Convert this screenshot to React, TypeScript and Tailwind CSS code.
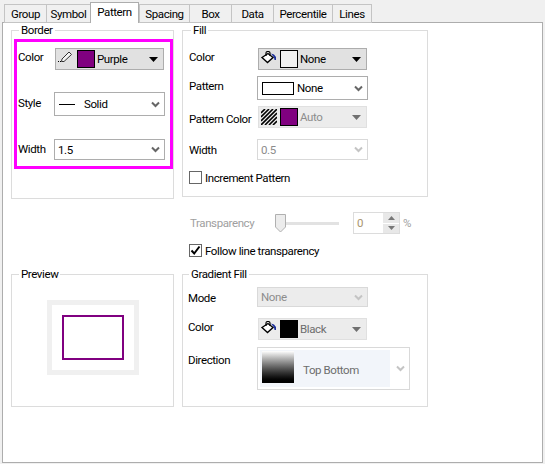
import type { ReactNode } from 'react';

const tabs = [
  { name: 'Group', w: 'w-[42px]' },
  { name: 'Symbol', w: 'w-[44px]' },
  { name: 'Pattern', w: 'w-[49px]', active: true },
  { name: 'Spacing', w: 'w-[50px]' },
  { name: 'Box', w: 'w-[42px]' },
  { name: 'Data', w: 'w-[42px]' },
  { name: 'Percentile', w: 'w-[59px]' },
  { name: 'Lines', w: 'w-[40px]' },
];

function Chevron({ muted }: { muted?: boolean }) {
  return (
    <svg width="9" height="7" viewBox="0 0 9 7" className="shrink-0">
      <path d="M1 1.5 L4.5 5 L8 1.5" fill="none" stroke={muted ? '#c4c4c4' : '#666666'} strokeWidth="2" />
    </svg>
  );
}

function Triangle({ muted }: { muted?: boolean }) {
  return (
    <svg width="9" height="5" viewBox="0 0 9 5" className="shrink-0">
      <path d="M0 0 H9 L4.5 5 Z" fill={muted ? '#707070' : '#000000'} />
    </svg>
  );
}

function PenIcon() {
  return (
    <svg width="16" height="16" viewBox="0 0 16 16" className="shrink-0">
      <path d="M4 8 L11 1 L13.5 3.5 L6 10.5 L3.5 10.5 Z" fill="#f4f4f4" stroke="#333333" strokeWidth="1" />
      <path d="M0 10.5h1M2 10.5h1" stroke="#000000" strokeWidth="1" />
    </svg>
  );
}

function BucketIcon() {
  return (
    <svg width="16" height="16" viewBox="0 0 16 16" className="shrink-0">
      <path d="M1 6.5 L7 2.5 L12 6.5 L6.5 11.5 Z" fill="#ffffff" stroke="#000000" strokeWidth="1.4" />
      <path d="M5 5 V2 Q5 0.5 7 0.5 Q9 0.5 9 2 V5" fill="none" stroke="#000000" strokeWidth="1.2" />
      <path d="M10 2.5 L13 3.5 L15 6 L15 9 L13.5 9 L13 6.5 Z" fill="#1c2f9c" />
    </svg>
  );
}

function HatchIcon() {
  return (
    <svg width="16" height="16" viewBox="0 0 16 16" className="shrink-0">
      <path d="M0 4L4 0M0 8L8 0M0 12L12 0M0 16L16 0M4 16L16 4M8 16L16 8M12 16L16 12" stroke="#000000" strokeWidth="1.6" />
    </svg>
  );
}

function ColorCombo({ icon, swatch, label, disabled, textColor }: { icon: ReactNode; swatch: string; label: string; disabled?: boolean; textColor?: string }) {
  return (
    <div className={`flex h-[22px] w-[109px] items-center border pl-[2px] ${disabled ? 'border-[#e0e0e0] bg-[#ececec]' : 'border-[#adadad] bg-[#e1e1e1]'}`}>
      {icon}
      <span className={`ml-[3px] h-[18px] w-[18px] shrink-0 border border-black ${swatch}`} />
      <span className={`ml-[2px] flex-1 ${textColor ?? 'text-black'}`}>{label}</span>
      <span className="mr-[5px]"><Triangle muted={disabled} /></span>
    </div>
  );
}

function Select({ children, h = 'h-[24px]', w = 'w-[111px]', disabled, bg }: { children: ReactNode; h?: string; w?: string; disabled?: boolean; bg?: string }) {
  return (
    <div className={`flex ${h} ${w} items-center border pr-[4px] ${disabled ? 'border-[#d9d9d9]' : 'border-[#adadad]'} ${bg ?? 'bg-white'}`}>
      <div className="flex min-w-0 flex-1 items-center">{children}</div>
      <Chevron muted={disabled} />
    </div>
  );
}

function Label({ children, w, mt }: { children: ReactNode; w: string; mt: string }) {
  return <span className={`shrink-0 self-start whitespace-nowrap ${w} ${mt}`}>{children}</span>;
}

function Group({ title, className, children, legend }: { title: string; className: string; children: ReactNode; legend: string }) {
  return (
    <div className={`relative border border-[#dcdcdc] ${className}`}>
      <span className={`absolute top-[-9px] bg-white px-[2px] ${legend}`}>{title}</span>
      {children}
    </div>
  );
}

function Checkbox({ checked, label }: { checked?: boolean; label: string }) {
  return (
    <div className="flex h-[13px] items-center">
      <span className="flex h-[13px] w-[13px] shrink-0 items-center justify-center border border-[#666666] bg-white">
        {checked && (
          <svg width="11" height="11" viewBox="0 0 11 11">
            <path d="M1.5 5.5 L4.2 8.5 L9.5 1.5" fill="none" stroke="#000000" strokeWidth="2" />
          </svg>
        )}
      </span>
      <span className="ml-[3px]">{label}</span>
    </div>
  );
}

export default function App() {
  return (
    <div className="h-[464px] w-[545px] overflow-hidden bg-[#f0f0f0] text-[11.5px] leading-[16px] tracking-[-0.4px] text-black" style={{ fontFamily: 'Roboto, sans-serif' }}>
      {/* Tabs */}
      <div className="relative z-10 flex h-[23px] items-end pl-[4px]">
        {tabs.map((tab) => (
          <div
            key={tab.name}
            className={
              tab.active
                ? `flex h-[21px] ${tab.w} items-start justify-center border border-b-0 border-[#adadad] bg-white pt-[1px]`
                : `flex h-[19px] ${tab.w} items-center justify-center border border-r-0 border-[#c4c4c4] bg-[#f0f0f0] last:border-r`
            }
          >
            {tab.name}
          </div>
        ))}
      </div>

      {/* Panel */}
      <div className="-mt-px ml-[2px] flex h-[441px] w-[541px] gap-[8px] border border-[#adadad] bg-white pl-[8px] pt-[7px]">
        <div className="flex w-[163px] flex-col">
          <Group title="Border" className="h-[169px]" legend="left-[7px]">
            <div className="ml-[2px] mt-[8px] flex h-[130px] w-[159px] flex-col border-[3px] border-[#ff00ff] pl-[1px]">
              <div className="mt-[6px] flex">
                <Label w="w-[37px]" mt="mt-[1px]">Color</Label>
                <ColorCombo icon={<PenIcon />} swatch="bg-[#800080]" label="Purple" />
              </div>
              <div className="mt-[22px] flex">
                <Label w="w-[36px]" mt="mt-[3px]">Style</Label>
                <Select>
                  <span className="ml-[4px] h-px w-[16px] bg-black" />
                  <span className="ml-[9px]">Solid</span>
                </Select>
              </div>
              <div className="mt-[23px] flex">
                <Label w="w-[36px]" mt="mt-[2px]">Width</Label>
                <Select h="h-[21px]"><span className="ml-[3px]">1.5</span></Select>
              </div>
            </div>
          </Group>

          <Group title="Preview" className="mt-[75px] h-[133px]" legend="left-[7px]">
            <div className="ml-[35px] mt-[25px] flex h-[75px] w-[92px] items-center justify-center border-[5px] border-[#f0f0f0]">
              <div className="h-[45px] w-[62px] border-2 border-[#800080]" />
            </div>
          </Group>
        </div>

        <div className="flex w-[246px] flex-col">
          <Group title="Fill" className="h-[167px] pl-[6px]" legend="left-[8px]">
            <div className="mt-[17px] flex">
              <Label w="w-[69px]" mt="mt-[1px]">Color</Label>
              <ColorCombo icon={<BucketIcon />} swatch="bg-[#f0f0f0]" label="None" />
            </div>
            <div className="mt-[6px] flex">
              <Label w="w-[68px]" mt="mt-[2px]">Pattern</Label>
              <Select>
                <span className="ml-[4px] h-[13px] w-[32px] border border-black bg-white" />
                <span className="ml-[3px]">None</span>
              </Select>
            </div>
            <div className="mt-[6px] flex">
              <Label w="w-[69px]" mt="mt-[5px]">Pattern Color</Label>
              <ColorCombo icon={<HatchIcon />} swatch="bg-[#800080]" label="Auto" disabled textColor="text-[#8c8c8c]" />
            </div>
            <div className="mt-[11px] flex">
              <Label w="w-[68px]" mt="mt-[3px]">Width</Label>
              <Select h="h-[21px]" disabled><span className="ml-[3px] text-[#8c8c8c]">0.5</span></Select>
            </div>
            <div className="mt-[11px]"><Checkbox label="Increment Pattern" /></div>
          </Group>

          {/* Transparency */}
          <div className="ml-[8px] mt-[15px] flex h-[22px] items-center text-[#a0a0a0]">
            <span className="w-[85px]">Transparency</span>
            <div className="relative flex h-[18px] w-[64px] items-center">
              <div className="ml-[11px] h-[3px] w-[53px] bg-[#e2e2e2]" />
              <svg width="11" height="19" viewBox="0 0 11 19" className="absolute left-0 top-0">
                <path d="M0.5 0.5 H10.5 V13 L5.5 18 L0.5 13 Z" fill="#ececec" stroke="#b0b0b0" />
              </svg>
            </div>
            <div className="ml-[14px] flex h-[22px] w-[47px] items-center justify-between border border-[#dcdcdc] bg-white pl-[3px]">
              <span className="text-[#a8946e]">0</span>
              <div className="flex h-full w-[16px] flex-col gap-px bg-white">
                <span className="flex flex-1 items-center justify-center bg-[#e8e8e8]">
                  <svg width="7" height="4" viewBox="0 0 7 4"><path d="M0 4 L3.5 0 L7 4 Z" fill="#777777" /></svg>
                </span>
                <span className="flex flex-1 items-center justify-center bg-[#e8e8e8]">
                  <svg width="7" height="4" viewBox="0 0 7 4"><path d="M0 0 L3.5 4 L7 0 Z" fill="#777777" /></svg>
                </span>
              </div>
            </div>
            <span className="ml-[3px]">%</span>
          </div>
          <div className="ml-[7px] mt-[10px]"><Checkbox checked label="Follow line transparency" /></div>

          <Group title="Gradient Fill" className="mt-[17px] h-[133px] pl-[5px]" legend="left-[6px]">
            <div className="mt-[12px] flex">
              <Label w="w-[69px]" mt="mt-[3px]">Mode</Label>
              <Select h="h-[20px]" disabled bg="bg-[#ececec]"><span className="ml-[3px] text-[#8c8c8c]">None</span></Select>
            </div>
            <div className="mt-[11px] flex">
              <Label w="w-[70px]" mt="mt-[1px]">Color</Label>
              <ColorCombo icon={<BucketIcon />} swatch="bg-black" label="Black" disabled textColor="text-[#6d6d6d]" />
            </div>
            <div className="mt-[7px] flex">
              <Label w="w-[69px]" mt="mt-[5px]">Direction</Label>
              <Select h="h-[43px]" w="w-[153px]" disabled>
                <div className="ml-[2px] flex h-[37px] w-[130px] items-start bg-[#f2f5fa] pl-[2px] pt-px">
                  <span className="h-[32px] w-[32px] bg-gradient-to-b from-white to-black" />
                  <span className="ml-[9px] mt-[11px] text-[#6d6d6d]">Top Bottom</span>
                </div>
              </Select>
            </div>
          </Group>
        </div>
      </div>
    </div>
  );
}
